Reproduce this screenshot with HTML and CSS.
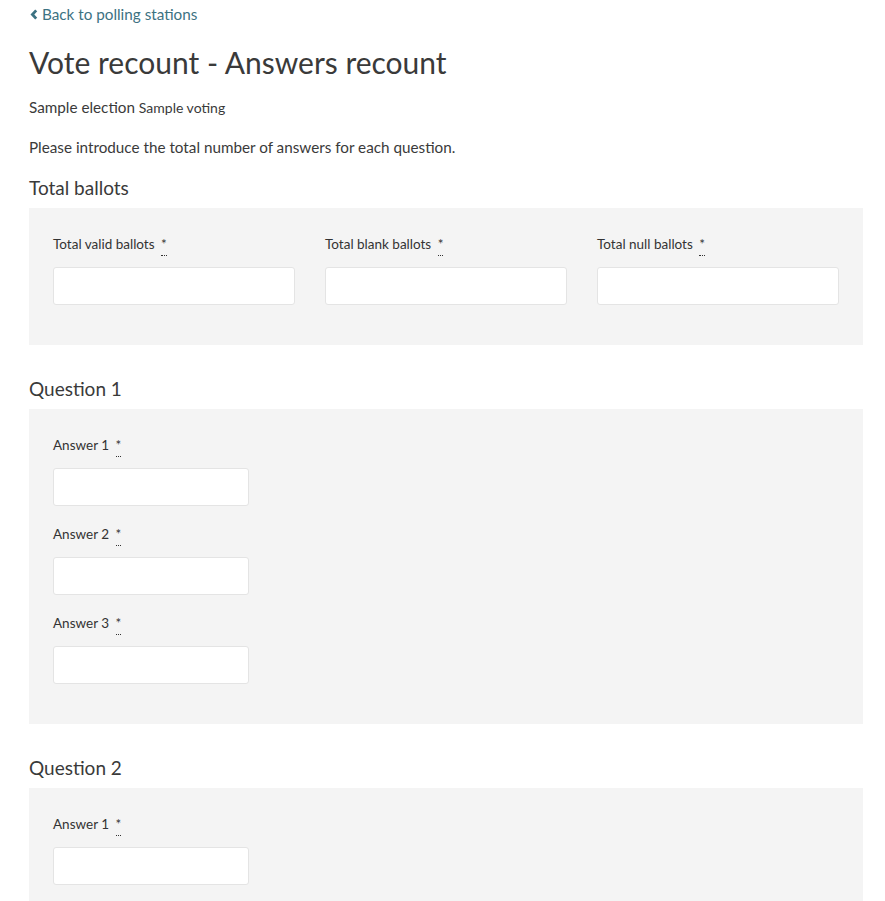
FILE: index.html
```html
<!DOCTYPE html>
<html lang="en">
<head>
<meta charset="utf-8">
<title>Vote recount - Answers recount</title>
<link rel="stylesheet" href="styles.css">
</head>
<body>
<main class="page">
  <a class="back" href="#"><svg class="chev" viewBox="0 0 8 11" width="8" height="11"><path d="M6.2 1.4 L2.4 5.5 L6.2 9.6" fill="none" stroke="currentColor" stroke-width="2.8"/></svg>Back to polling stations</a>
  <h1 class="title">Vote recount - Answers recount</h1>
  <p class="sub">Sample election <small class="sub-small">Sample voting</small></p>
  <p class="intro">Please introduce the total number of answers for each question.</p>

  <h3 class="sec">Total ballots</h3>
  <div class="box">
    <div class="grid3">
      <div class="field"><label class="lbl">Total valid ballots <abbr title="required">*</abbr></label><input class="inp" type="text"></div>
      <div class="field"><label class="lbl">Total blank ballots <abbr title="required">*</abbr></label><input class="inp" type="text"></div>
      <div class="field"><label class="lbl">Total null ballots <abbr title="required">*</abbr></label><input class="inp" type="text"></div>
    </div>
  </div>

  <h3 class="sec">Question 1</h3>
  <div class="box">
    <div class="field narrow"><label class="lbl">Answer 1 <abbr title="required">*</abbr></label><input class="inp" type="text"></div>
    <div class="field narrow"><label class="lbl">Answer 2 <abbr title="required">*</abbr></label><input class="inp" type="text"></div>
    <div class="field narrow"><label class="lbl">Answer 3 <abbr title="required">*</abbr></label><input class="inp" type="text"></div>
  </div>

  <h3 class="sec">Question 2</h3>
  <div class="box">
    <div class="field narrow"><label class="lbl">Answer 1 <abbr title="required">*</abbr></label><input class="inp" type="text"></div>
  </div>
</main>
</body>
</html>
```
FILE: styles.css
```css
html, body { margin: 0; padding: 0; background: #fff; }
body { font-family: Lato, "Noto Sans", sans-serif; color: #3a3a3a; }
.page { padding: 4px 22px 0 29px; }
.back { display: flex; align-items: center; gap: 4px; color: #3c7282; text-decoration: none; font-size: 15.25px; line-height: 20px; padding-left: 1px; }
.chev { display: block; }
.title { font-size: 30px; font-weight: 400; line-height: 40px; margin: 18px 0 0; color: #3a3a3a; }
.sub { font-size: 15.25px; line-height: 20px; margin: 15px 0 0; }
.sub-small { font-size: 14px; }
.intro { font-size: 15.25px; line-height: 20px; margin: 19px 0 0; }
.sec { font-size: 19px; font-weight: 400; line-height: 24px; margin: 19px 0 8px; }
.box + .sec { margin-top: 32px; }
.box { background: #f4f4f4; padding: 26px 24px 22px; }
.grid3 { display: grid; grid-template-columns: repeat(3, 1fr); column-gap: 30px; }
.field { display: flex; flex-direction: column; margin-bottom: 18px; }
.narrow { width: 196px; }
.lbl { font-size: 13.5px; line-height: 20px; margin-bottom: 13px; color: #333; }
abbr { text-decoration: none; border-bottom: 1px dotted #333; padding: 0 0 3px; margin-left: 3px; }
.inp { box-sizing: border-box; height: 38px; border: 1px solid #e4e4e4; border-radius: 3px; background: #fff; margin: 0; padding: 0 10px; font: inherit; }
```
